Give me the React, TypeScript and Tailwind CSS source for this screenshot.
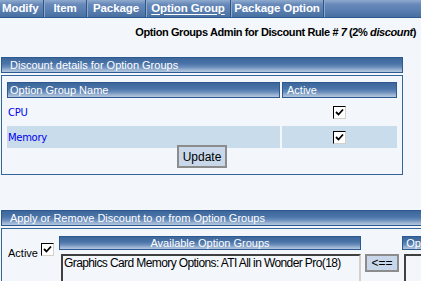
import React from "react";

const hdr =
  "bg-[linear-gradient(to_bottom,#3d669a_0%,#4a73a7_40%,#6a8dbb_65%,#9bb4d3_85%,#b3c6de_100%)] border border-[#2c5a90] text-white";

function Check() {
  return (
    <div className="w-[13px] h-[13px] bg-white border border-t-black border-l-black border-b-[#d4d0c8] border-r-[#d4d0c8] flex items-center justify-center">
      <svg width="9" height="9" viewBox="0 0 9 9">
        <path d="M1 4 L3.5 6.5 L8 1.5" stroke="#000" strokeWidth="1.8" fill="none" />
      </svg>
    </div>
  );
}

const tabs = [
  { t: "Modify", w: "w-[44px]", first: true },
  { t: "Item", w: "w-[43px]" },
  { t: "Package", w: "w-[59px]" },
  { t: "Option Group", w: "w-[85px]", active: true },
  { t: "Package Option", w: "w-[93px]" },
];

export default function App() {
  return (
    <div className="w-[421px] h-[281px] overflow-hidden bg-[#f3f7fb] font-['Liberation_Sans',sans-serif]">
      {/* Tabs */}
      <div className="flex h-[18px] border-b border-[#2c5a90] bg-[linear-gradient(to_bottom,#8fabce_0%,#6889ba_25%,#5a7fb2_60%,#46709f_100%)]">
        {tabs.map((tb) => (
          <div
            key={tb.t}
            className={`${tb.w} h-full flex items-center ${tb.first ? "pl-[2px]" : "justify-center"} border-r border-[#2e5584] shadow-[1px_0_0_#8fa9cc] text-white font-bold text-[11.5px] tracking-[-0.1px]`}
          >
            <span className={tb.active ? "underline underline-offset-2" : ""}>{tb.t}</span>
          </div>
        ))}
      </div>

      {/* Title */}
      <div className="flex justify-end pr-[5px] mt-[7px] h-[14px] items-center text-black font-bold text-[11px] tracking-[-0.4px]">
        <span>
          Option Groups Admin for Discount Rule <i># 7</i> (2% <i>discount</i>)
        </span>
      </div>

      {/* Section 1 */}
      <div className="ml-px w-[402px] mt-[18px]">
        <div className={`${hdr} h-[16px] flex items-center pl-[8px] text-[11px]`}>
          Discount details for Option Groups
        </div>
        <div className="mt-[2px] h-[100px] border border-[#336699] pt-[6px] px-[5px]">
          <div className="flex gap-[2px]">
            <div className={`${hdr} w-[273px] h-[16px] flex items-center pl-[2px] text-[11px]`}>
              Option Group Name
            </div>
            <div className={`${hdr} w-[115px] h-[16px] flex items-center pl-[4px] text-[11px]`}>
              Active
            </div>
          </div>
          <div className="flex gap-[2px] mt-[3px] h-[22px]">
            <div className="w-[273px] flex items-center pl-[1px] text-[#0000ee] text-[10px] tracking-[-0.3px] font-['DejaVu_Sans',sans-serif]">
              CPU
            </div>
            <div className="w-[115px] flex items-center justify-center">
              <Check />
            </div>
          </div>
          <div className="flex gap-[2px] mt-[3px] h-[22px]">
            <div className="w-[273px] bg-[#c9dcec] flex items-center pl-[1px] text-[#0000ee] text-[10px] tracking-[-0.3px] font-['DejaVu_Sans',sans-serif]">
              Memory
            </div>
            <div className="w-[115px] bg-[#c9dcec] flex items-center justify-center">
              <Check />
            </div>
          </div>
          <div className="flex justify-center mt-[-3px]">
            <div className="w-[50px] h-[23px] bg-[#c8d8ea] border-2 border-[#8c8c8c] flex items-center justify-center text-[12px] text-black">
              Update
            </div>
          </div>
        </div>
      </div>

      {/* Section 2 */}
      <div className="ml-px w-[520px] mt-[35px]">
        <div className={`${hdr} h-[16px] flex items-center pl-[8px] text-[11px]`}>
          Apply or Remove Discount to or from Option Groups
        </div>
        <div className="mt-[2px] h-[80px] border border-[#336699] pt-[7px] pl-[6px] flex">
          <div className="flex items-start gap-[3px] w-[52px] pt-[4px]">
            <span className="text-[11px] text-black mt-[5px]">Active</span>
            <div className="mt-[3px]">
              <Check />
            </div>
          </div>
          <div className="w-[304px]">
            <div className={`${hdr} h-[14px] flex items-center justify-center text-[11px]`}>
              Available Option Groups
            </div>
            <div className="mt-[4px] ml-[2px] w-[300px] h-[40px] bg-[#f3f7fb] border-2 border-t-[#404040] border-l-[#404040] border-b-[#d4d0c8] border-r-[#d4d0c8] pl-[1px] leading-[15px] text-[12px] text-black tracking-[-0.6px] whitespace-nowrap">
              Graphics Card Memory Options: ATI All in Wonder Pro(18)
            </div>
          </div>
          <div className="w-[42px] pt-[18px] pl-[4px]">
            <div className="w-[34px] h-[18px] bg-[#c8d8ea] border-2 border-[#8c8c8c] flex items-center justify-center text-[12px] text-black">
              &lt;==
            </div>
          </div>
          <div className="w-[120px]">
            <div className={`${hdr} h-[14px] flex items-center pl-[3px] text-[11px] overflow-hidden whitespace-nowrap`}>
              Op
            </div>
            <div className="mt-[4px] ml-[2px] w-[110px] h-[40px] bg-[#f3f7fb] border-2 border-t-[#404040] border-l-[#404040] border-b-[#d4d0c8] border-r-[#d4d0c8]" />
          </div>
        </div>
      </div>
    </div>
  );
}
